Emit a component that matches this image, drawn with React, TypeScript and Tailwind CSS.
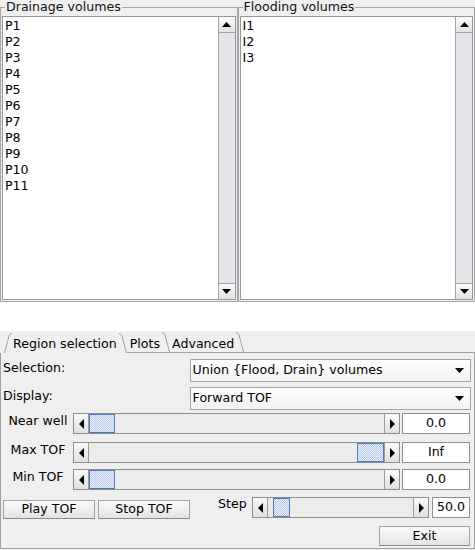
import React from "react";

const drains = ["P1", "P2", "P3", "P4", "P5", "P6", "P7", "P8", "P9", "P10", "P11"];
const floods = ["I1", "I2", "I3"];

function Tri({ dir }: { dir: "up" | "down" | "left" | "right" }) {
  const pts = {
    up: "0,5 4.5,0 9,5",
    down: "0,0 9,0 4.5,5",
    left: "5,0 5,10 0,5",
    right: "0,0 5,5 0,10",
  }[dir];
  const vertical = dir === "up" || dir === "down";
  return (
    <svg width={vertical ? 9 : 5} height={vertical ? 5 : 10} viewBox={vertical ? "0 0 9 5" : "0 0 5 10"}>
      <polygon points={pts} fill="#000" />
    </svg>
  );
}

function ScrollBar() {
  return (
    <div className="w-[17px] flex flex-col border-l border-[#a3a3a3] bg-[#e4e4ea]">
      <div className="h-[16px] flex items-center justify-center border-b border-[#a3a3a3] bg-gradient-to-b from-[#fbfbfb] to-[#e2e2e2]">
        <Tri dir="up" />
      </div>
      <div className="flex-1" />
      <div className="h-[16px] flex items-center justify-center border-t border-[#a3a3a3] bg-gradient-to-b from-[#fbfbfb] to-[#e2e2e2]">
        <Tri dir="down" />
      </div>
    </div>
  );
}

function VolumeList({ title, items }: { title: string; items: string[] }) {
  return (
    <fieldset className="flex-1 min-w-0 m-0 h-[302px] border border-[#a5a5a5] px-px pb-px pt-[2px] flex">
      <legend className="ml-[3px] px-px leading-[14px] text-[#111]">{title}</legend>
      <div className="flex-1 flex border border-[#979797] bg-white">
        <div className="flex-1 pl-[2px] pt-[1px]">
          {items.map((it) => (
            <div key={it} className="h-[16px] leading-[16px]">
              {it}
            </div>
          ))}
        </div>
        <ScrollBar />
      </div>
    </fieldset>
  );
}

function TabEdge({ left }: { left?: boolean }) {
  return (
    <svg width="8" height="21" viewBox="0 0 8 21" className="shrink-0">
      {left ? (
        <path d="M0.5 21 L5 4 Q6 1.5 8 1.5" stroke="#a0a0a0" fill="none" />
      ) : (
        <path d="M0 1.5 Q2 1.5 3 4 L7.5 21" stroke="#a0a0a0" fill="none" />
      )}
    </svg>
  );
}

function Choice({ value }: { value: string }) {
  return (
    <div className="w-[282px] h-full flex items-center justify-between border border-[#a5a5a5] bg-gradient-to-b from-[#ffffff] to-[#f1f1f1] pl-[2px] pr-[6px]">
      <span>{value}</span>
      <Tri dir="down" />
    </div>
  );
}

function ArrowBtn({ dir }: { dir: "left" | "right" }) {
  return (
    <div
      className={`w-[15px] shrink-0 flex items-center justify-center bg-gradient-to-b from-[#fafafa] to-[#e0e0e0] ${
        dir === "left" ? "border-r" : "border-l"
      } border-[#9c9c9c]`}
    >
      <Tri dir={dir} />
    </div>
  );
}

function Thumb({ w, className = "" }: { w: string; className?: string }) {
  return (
    <div
      className={`${w} shrink-0 border border-[#4f79bd] bg-[repeating-conic-gradient(#b3c8ea_0%_25%,#eef3fb_0%_50%)] bg-[length:2px_2px] ${className}`}
    />
  );
}

function Slider({ pos }: { pos: "start" | "end" | "near" }) {
  return (
    <div className="flex-1 h-full flex border border-[#8e8e8e] bg-[#ececec]">
      <ArrowBtn dir="left" />
      <div className="flex-1 flex">
        {pos === "start" && <Thumb w="w-[26px]" />}
        {pos === "near" && <Thumb w="w-[17px]" className="ml-[5px]" />}
        {pos === "end" && <Thumb w="w-[27px]" className="ml-auto" />}
      </div>
      <ArrowBtn dir="right" />
    </div>
  );
}

function ValueBox({ value, w }: { value: string; w: string }) {
  return (
    <div className={`${w} h-full flex items-center justify-center border border-[#8e8e8e] bg-white`}>
      {value}
    </div>
  );
}

function SliderRow({ label, pos, value, mt }: { label: string; pos: "start" | "end"; value: string; mt: string }) {
  return (
    <div className={`${mt} h-[21px] flex items-center pl-[2px] pr-[4px]`}>
      <div className="w-[70px] text-center -mt-[4px]">{label}</div>
      <Slider pos={pos} />
      <div className="w-[2px]" />
      <ValueBox value={value} w="w-[68px]" />
    </div>
  );
}

function Button({ label, w }: { label: string; w: string }) {
  return (
    <div
      className={`${w} h-full flex items-center justify-center border border-[#a3a3a3] border-b-[#8a8a8a] bg-gradient-to-b from-[#fbfbfb] to-[#e3e3e3]`}
    >
      {label}
    </div>
  );
}

export default function App() {
  return (
    <div className="w-[475px] h-[550px] bg-white text-[12.6px] text-black font-['DejaVu_Sans',sans-serif] flex flex-col overflow-hidden">
      <div className="h-[302px] flex bg-[#efefef]">
        <VolumeList title="Drainage volumes" items={drains} />
        <VolumeList title="Flooding volumes" items={floods} />
      </div>
      <div className="h-[29px]" />
      <div className="flex-1 flex flex-col bg-[#efefef]">
        <div className="h-[22px] flex items-end pl-[4px]">
          <TabEdge left />
          <div className="h-[21px] leading-[21px] pt-[1px] pl-px pr-[2px]">Region selection</div>
          <TabEdge />
          <div className="h-[21px] leading-[21px] pt-[1px] pl-[3px] pr-[2px] border-b border-[#a0a0a0]">Plots</div>
          <div className="border-b border-[#a0a0a0] flex">
            <TabEdge />
          </div>
          <div className="h-[21px] leading-[21px] pt-[1px] pl-[2px] pr-[2px] border-b border-[#a0a0a0]">Advanced</div>
          <div className="border-b border-[#a0a0a0] flex">
            <TabEdge />
          </div>
          <div className="flex-1 border-b border-[#a0a0a0]" />
        </div>
        <div className="h-[196px] flex flex-col border-x border-b border-[#a0a0a0]">
          <div className="mt-[6px] h-[23px] flex items-center pr-[3px]">
            <div className="w-[189px] pl-[2px] -mt-[5px]">Selection:</div>
            <Choice value="Union {Flood, Drain} volumes" />
          </div>
          <div className="mt-[5px] h-[23px] flex items-center pr-[3px]">
            <div className="w-[189px] pl-[2px] -mt-[5px]">Display:</div>
            <Choice value="Forward TOF" />
          </div>
          <SliderRow mt="mt-[3px]" label="Near well" pos="start" value="0.0" />
          <SliderRow mt="mt-[8px]" label="Max TOF" pos="end" value="Inf" />
          <SliderRow mt="mt-[6px]" label="Min TOF" pos="start" value="0.0" />
          <div className="mt-[7px] h-[21px] flex items-center pl-[2px] pr-[4px]">
            <div className="h-[19px] mt-[4px] flex gap-[3px]">
              <Button label="Play TOF" w="w-[92px]" />
              <Button label="Stop TOF" w="w-[92px]" />
            </div>
            <div className="ml-[28px] w-[34px] -mt-[6px]">Step</div>
            <Slider pos="near" />
            <div className="w-[3px]" />
            <ValueBox value="50.0" w="w-[38px]" />
          </div>
          <div className="mt-[8px] h-[20px] flex justify-end pr-[4px]">
            <Button label="Exit" w="w-[91px]" />
          </div>
        </div>
      </div>
    </div>
  );
}
